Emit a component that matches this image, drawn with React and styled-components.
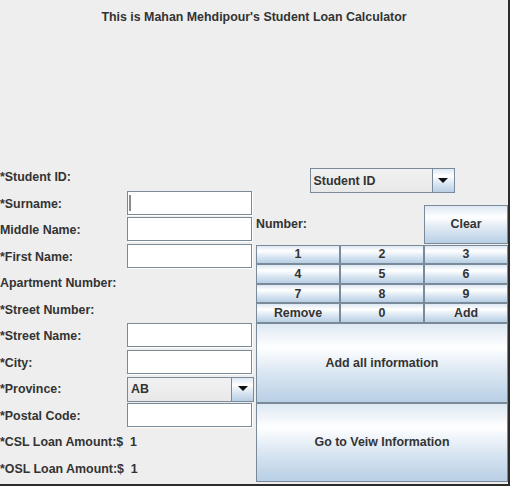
import React from "react";
import styled, { createGlobalStyle } from "styled-components";

const GlobalStyle = createGlobalStyle`
  body {
    margin: 0;
    background: #eeeeee;
    font-family: "Liberation Sans", Arial, sans-serif;
  }
`;

const Frame = styled.div`
  width: 508px;
  height: 484px;
  background: #eeeeee;
  border-right: 2px solid #2b2b2b;
  border-bottom: 2px solid #2b2b2b;
  color: #333333;
  font-size: 12.4px;
  font-weight: bold;
  display: flex;
  flex-direction: column;
`;

const Title = styled.div`
  height: 164px;
  box-sizing: border-box;
  padding-top: 10px;
  text-align: center;
  line-height: 14px;
`;

const Form = styled.div`
  display: grid;
  grid-template-columns: 127px 129px 252px;
  grid-template-rows: repeat(12, 1fr);
  height: 318px;
`;

const Label = styled.div`
  grid-column: 1 / ${(p) => (p.$wide ? 3 : 2)};
  grid-row: ${(p) => p.$row};
  display: flex;
  align-items: center;
  white-space: nowrap;
`;

const Field = styled.div`
  grid-column: 2;
  grid-row: ${(p) => p.$row};
  align-self: start;
  width: 125px;
  height: 24px;
  box-sizing: border-box;
  border: 1px solid #7a8a99;
  box-shadow: 1px 1px 0 #ffffff;
  background: #ffffff;
  position: relative;
  display: flex;
  align-items: center;

  &::before {
    content: "";
    display: ${(p) => (p.$caret ? "block" : "none")};
    position: absolute;
    left: 1px;
    top: 3px;
    width: 2px;
    height: 16px;
    background: #8c8c8c;
  }
`;

const Combo = styled.div`
  display: flex;
  width: ${(p) => p.$width}px;
  height: 25px;
  box-sizing: border-box;
  border: 1px solid #7a8a99;
  background: #eeeeee;
`;

const ComboText = styled.div`
  flex: 1;
  display: flex;
  align-items: center;
  padding-left: 3px;
  border-right: 1px solid #7a8a99;
  background: linear-gradient(to bottom, #f2f2f2, #e8e8e8);
`;

const ArrowButton = styled.div`
  width: 21px;
  display: flex;
  align-items: center;
  justify-content: center;
  background: linear-gradient(
    to bottom,
    #dde8f3 0%,
    #ffffff 30%,
    #dde8f3 60%,
    #b8cfe5 100%
  );
`;

const ProvinceCell = styled.div`
  grid-column: 2;
  grid-row: 9;
  align-self: center;
`;

const TopBlock = styled.div`
  grid-column: 3;
  grid-row: 1 / 4;
  display: flex;
  flex-direction: column;
  align-items: center;
  padding-top: 4px;
`;

const NumberRow = styled.div`
  margin-top: auto;
  width: 100%;
  height: 39px;
  display: grid;
  grid-template-columns: repeat(3, 1fr);
  align-items: center;
`;

const Button = styled.div`
  box-sizing: border-box;
  border: 1px solid #7a8a99;
  background: linear-gradient(
    to bottom,
    #dde8f3 0%,
    #ffffff 30%,
    #dde8f3 60%,
    #b8cfe5 100%
  );
  display: flex;
  align-items: center;
  justify-content: center;
  grid-column: ${(p) => p.$col || "auto"};
  grid-row: ${(p) => p.$row || "auto"};
  height: ${(p) => (p.$fill ? "100%" : "auto")};
`;

const Keypad = styled.div`
  grid-column: 3;
  grid-row: 4 / 7;
  display: grid;
  grid-template-columns: repeat(3, 1fr);
  grid-template-rows: repeat(4, 1fr);
  padding-top: 1px;
`;

const BigButton = styled(Button)`
  grid-column: 3;
`;

const Triangle = () => (
  <svg width="10" height="6" viewBox="0 0 10 6">
    <polygon points="0,0 10,0 5,5" fill="#111" />
  </svg>
);

const keys = ["1", "2", "3", "4", "5", "6", "7", "8", "9", "Remove", "0", "Add"];

export default function App() {
  return (
    <>
      <GlobalStyle />
      <Frame>
        <Title>This is Mahan Mehdipour's Student Loan Calculator</Title>
        <Form>
          <Label $row={1}>*Student ID:</Label>
          <Label $row={2}>*Surname:</Label>
          <Field $row={2} $caret />
          <Label $row={3}>Middle Name:</Label>
          <Field $row={3} />
          <Label $row={4}>*First Name:</Label>
          <Field $row={4} />
          <Label $row={5} $wide>Apartment Number:</Label>
          <Label $row={6}>*Street Number:</Label>
          <Label $row={7}>*Street Name:</Label>
          <Field $row={7} />
          <Label $row={8}>*City:</Label>
          <Field $row={8} />
          <Label $row={9}>*Province:</Label>
          <ProvinceCell>
            <Combo $width={127}>
              <ComboText>AB</ComboText>
              <ArrowButton>
                <Triangle />
              </ArrowButton>
            </Combo>
          </ProvinceCell>
          <Label $row={10}>*Postal Code:</Label>
          <Field $row={10} />
          <Label $row={11} $wide>*CSL Loan Amount:$&nbsp; 1</Label>
          <Label $row={12} $wide>*OSL Loan Amount:$&nbsp; 1</Label>

          <TopBlock>
            <Combo $width={145}>
              <ComboText>Student ID</ComboText>
              <ArrowButton>
                <Triangle />
              </ArrowButton>
            </Combo>
            <NumberRow>
              <span>Number:</span>
              <Button $col={3} $fill>
                Clear
              </Button>
            </NumberRow>
          </TopBlock>

          <Keypad>
            {keys.map((k) => (
              <Button key={k}>{k}</Button>
            ))}
          </Keypad>

          <BigButton $row="7 / 10">Add all information</BigButton>
          <BigButton $row="10 / 13">Go to Veiw Information</BigButton>
        </Form>
      </Frame>
    </>
  );
}
